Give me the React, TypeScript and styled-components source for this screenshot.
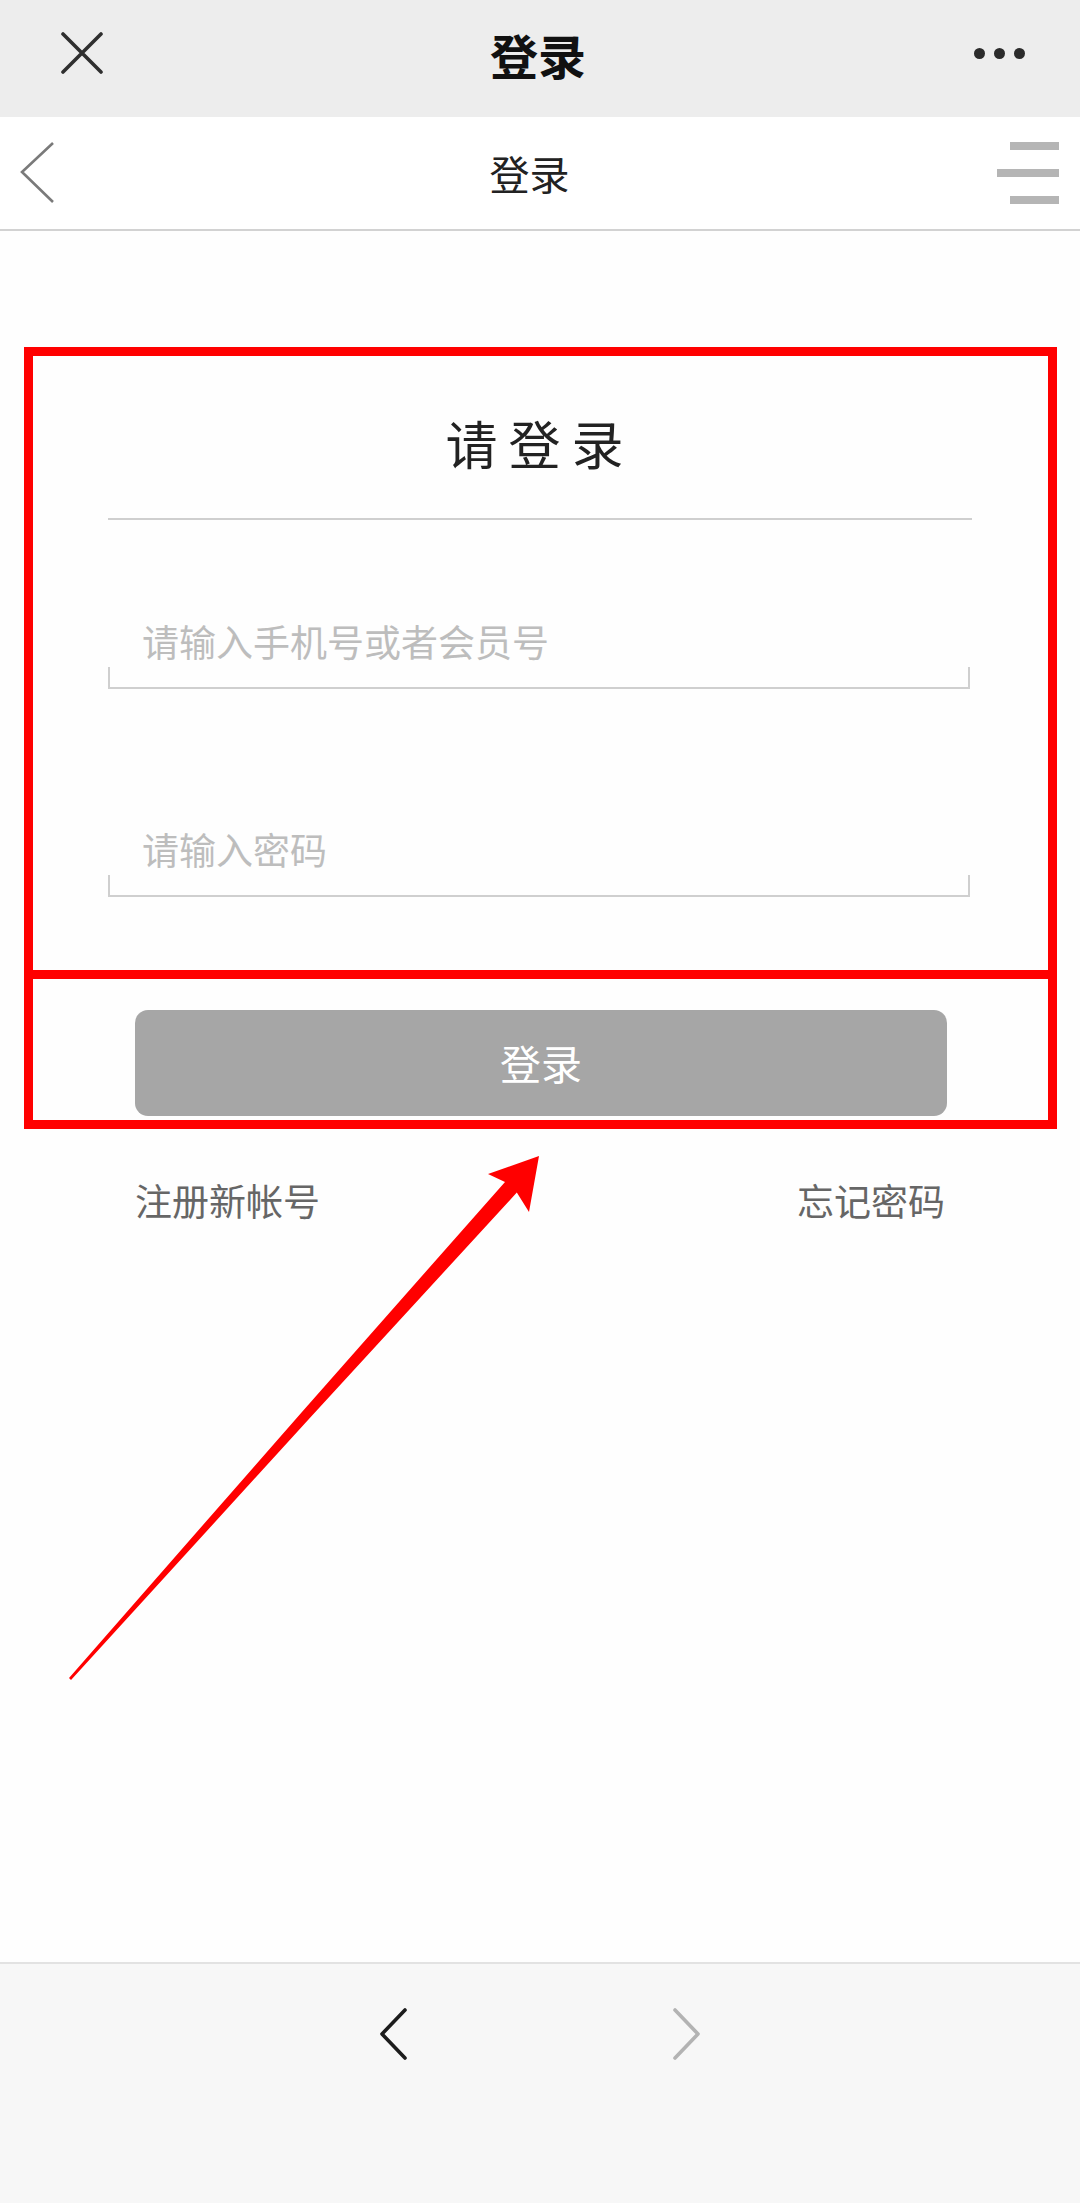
import React from "react";
import styled, { createGlobalStyle } from "styled-components";

const GlobalStyle = createGlobalStyle`
  html, body {
    margin: 0;
    padding: 0;
    background: #fefefe;
  }
  body {
    font-family: "Noto Sans CJK SC", "Noto Sans", sans-serif;
  }
  * { box-sizing: border-box; }
`;

const Page = styled.div`
  position: relative;
  width: 1080px;
  height: 2203px;
  display: flex;
  flex-direction: column;
  background: #fefefe;
  overflow: hidden;
`;

const TopBar = styled.div`
  height: 117px;
  flex: none;
  background: #ededed;
  display: grid;
  grid-template-columns: 200px 1fr 200px;
  align-items: center;
`;

const TopTitle = styled.div`
  text-align: center;
  font-size: 48px;
  font-weight: 700;
  color: #111;
  line-height: 1;
  padding-right: 4px;
  margin-top: -10px;
`;

const CloseBtn = styled.div`
  display: flex;
  align-items: center;
  padding-left: 61px;
  margin-top: -11px;
`;

const MoreBtn = styled.div`
  display: flex;
  justify-content: flex-end;
  align-items: center;
  gap: 9px;
  padding-right: 55px;
  margin-top: -11px;
`;

const Dot = styled.span`
  width: 11px;
  height: 11px;
  border-radius: 50%;
  background: #2b2b2b;
`;

const Header = styled.div`
  height: 114px;
  flex: none;
  background: #ffffff;
  border-bottom: 2px solid #d2d2d2;
  display: grid;
  grid-template-columns: 200px 1fr 200px;
  align-items: center;
`;

const BackBtn = styled.div`
  display: flex;
  align-items: center;
  padding-left: 20px;
`;

const HeaderTitle = styled.div`
  text-align: center;
  font-size: 40px;
  color: #222;
  line-height: 1;
  padding-right: 21px;
`;

const Menu = styled.div`
  display: flex;
  flex-direction: column;
  align-items: flex-end;
  gap: 19px;
  padding-right: 21px;
`;

const MenuLine = styled.span<{ $w: number }>`
  display: block;
  width: ${(p) => p.$w}px;
  height: 8px;
  background: #b5b5b5;
`;

const Main = styled.main`
  flex: 1;
  display: flex;
  flex-direction: column;
  padding: 116px 23px 0 24px;
`;

const FormBox = styled.div`
  border: 9px solid #ff0000;
  padding: 0 76px 73px 75px;
  display: flex;
  flex-direction: column;
  background: #fefefe;
`;

const FormTitle = styled.h1`
  margin: 36px 0 0;
  height: 100px;
  display: flex;
  align-items: center;
  justify-content: center;
  font-size: 52px;
  font-weight: 400;
  letter-spacing: 11px;
  color: #222;
`;

const Divider = styled.div`
  margin-top: 26px;
  height: 2px;
  background: #cfcfcf;
`;

const Field = styled.label<{ $gap: number }>`
  position: relative;
  display: flex;
  align-items: center;
  margin-top: ${(p) => p.$gap}px;
  height: 99px;
  padding: 5px 0 0 34px;
  border-bottom: 2px solid #cfcfcf;
  margin-right: 2px;

  &::before,
  &::after {
    content: "";
    position: absolute;
    bottom: 0;
    width: 2px;
    height: 20px;
    background: #cfcfcf;
  }
  &::before { left: 0; }
  &::after { right: 0; }
`;

const Input = styled.input`
  width: 100%;
  border: none;
  outline: none;
  background: transparent;
  padding: 0;
  font-family: "Noto Sans CJK SC", "Noto Sans", sans-serif;
  font-size: 37px;
  color: #333;

  &::placeholder {
    color: #bdbdbd;
  }
`;

const ButtonBox = styled.div`
  border: 9px solid #ff0000;
  border-top: none;
  padding: 31px 101px 4px 102px;
  background: #fefefe;
`;

const LoginButton = styled.button`
  width: 100%;
  height: 106px;
  border: none;
  border-radius: 13px;
  background: #a6a6a6;
  color: #ffffff;
  font-family: "Noto Sans CJK SC", "Noto Sans", sans-serif;
  font-size: 41px;
  padding: 0 0 2px;
  cursor: pointer;
`;

const LinkRow = styled.div`
  margin-top: 46px;
  padding: 0 112px 0 111px;
  display: flex;
  justify-content: space-between;
  line-height: 50px;
`;

const TextLink = styled.a`
  font-size: 37px;
  color: #666;
  text-decoration: none;
`;

const BottomBar = styled.nav`
  height: 241px;
  flex: none;
  background: #f7f7f7;
  border-top: 2px solid #e2e2e2;
  display: flex;
  justify-content: center;
  align-items: flex-start;
  gap: 262px;
  padding-top: 44px;
`;

const ArrowLayer = styled.svg`
  position: absolute;
  left: 0;
  top: 0;
  pointer-events: none;
`;

const Chevron = ({ dir, color, w }: { dir: "left" | "right"; color: string; w: number }) => (
  <svg width="30" height="52" viewBox="0 0 30 52">
    <polyline
      points={dir === "left" ? "26,2 3,26 26,50" : "4,2 27,26 4,50"}
      fill="none"
      stroke={color}
      strokeWidth={w}
      strokeLinecap="round"
      strokeLinejoin="round"
    />
  </svg>
);

export default function App() {
  return (
    <>
      <GlobalStyle />
      <Page>
        <TopBar>
          <CloseBtn>
            <svg width="42" height="42" viewBox="0 0 42 42">
              <path d="M2 2 L40 40 M40 2 L2 40" stroke="#2f2f2f" strokeWidth="3.6" strokeLinecap="round" />
            </svg>
          </CloseBtn>
          <TopTitle>登录</TopTitle>
          <MoreBtn>
            <Dot />
            <Dot />
            <Dot />
          </MoreBtn>
        </TopBar>

        <Header>
          <BackBtn>
            <svg width="36" height="64" viewBox="0 0 36 64">
              <polyline points="33,2 2,31 33,61" fill="none" stroke="#7a7a7a" strokeWidth="2.6" />
            </svg>
          </BackBtn>
          <HeaderTitle>登录</HeaderTitle>
          <Menu>
            <MenuLine $w={49} />
            <MenuLine $w={62} />
            <MenuLine $w={49} />
          </Menu>
        </Header>

        <Main>
          <FormBox>
            <FormTitle>请登录</FormTitle>
            <Divider />
            <Field $gap={70}>
              <Input type="text" placeholder="请输入手机号或者会员号" />
            </Field>
            <Field $gap={109}>
              <Input type="password" placeholder="请输入密码" />
            </Field>
          </FormBox>
          <ButtonBox>
            <LoginButton>登录</LoginButton>
          </ButtonBox>
          <LinkRow>
            <TextLink href="#">注册新帐号</TextLink>
            <TextLink href="#">忘记密码</TextLink>
          </LinkRow>
        </Main>

        <BottomBar>
          <Chevron dir="left" color="#1c1c1c" w={3.6} />
          <Chevron dir="right" color="#b3b3b3" w={3.6} />
        </BottomBar>

        <ArrowLayer width="1080" height="2203" viewBox="0 0 1080 2203">
          <polygon
            points="539,1156 529,1212 516.8,1192.6 308.7,1419.3 71,1680 69,1678 301.3,1412.7 505,1181.9 488,1174"
            fill="#ff0000"
          />
        </ArrowLayer>
      </Page>
    </>
  );
}
